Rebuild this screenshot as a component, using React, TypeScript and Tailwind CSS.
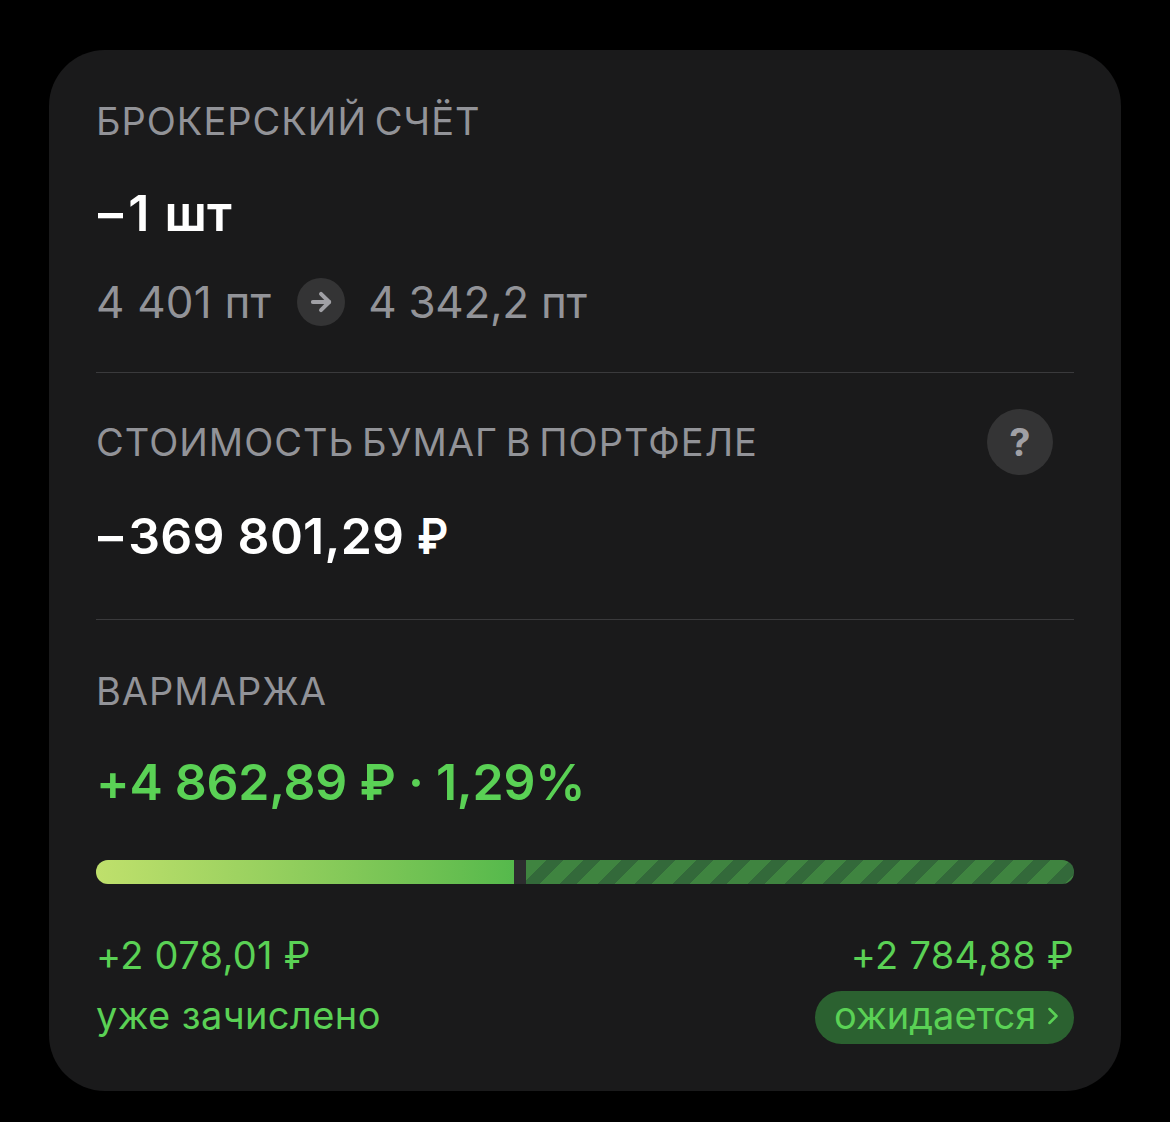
import React from 'react';
import { ArrowRight, ChevronRight } from 'lucide-react';

const font = { fontFamily: 'Inter, "Noto Sans", sans-serif' };

function Label({ children }: { children: React.ReactNode }) {
  return <div className="text-[38px] leading-[44px] tracking-[1px] text-[#929398] [word-spacing:-3.9px]">{children}</div>;
}

export default function App() {
  return (
    <div className="min-h-[1122px] w-[1170px] bg-black pt-[50px] pl-[49px]" style={font}>
      <div className="h-[1041px] w-[1072px] rounded-[56px] bg-[#1a1a1b] px-[47px]">
        {/* позиция */}
        <div className="h-[323px] border-b border-[#3a3a3c] pt-[49px]">
          <Label>БРОКЕРСКИЙ СЧЁТ</Label>
          <div className="mt-[42px] pl-[2px] text-[50px] leading-[56px] font-semibold tracking-[0.25px] text-white [font-kerning:none] [word-spacing:2px]">
            <span className="mr-[5px]">–</span>1 шт
          </div>
          <div className="mt-[35px] flex items-center text-[44px] leading-[52px] text-[#929398]">
            <span className="tracking-[0.2px]">4 401 пт</span>
            <span className="mr-[23px] ml-[26px] flex h-[48px] w-[48px] items-center justify-center rounded-full bg-[#343435]">
              <ArrowRight size={28} strokeWidth={3.4} className="text-[#a0a0a5]" />
            </span>
            <span className="tracking-[-0.3px]">4 342,2 пт</span>
          </div>
        </div>

        {/* стоимость */}
        <div className="h-[247px] border-b border-[#3a3a3c] pt-[36px]">
          <div className="flex items-center justify-between pr-[21px]">
            <Label>СТОИМОСТЬ БУМАГ В ПОРТФЕЛЕ</Label>
            <span className="flex h-[66px] w-[66px] items-center justify-center rounded-full bg-[#343435] text-[38px] font-bold text-[#a0a0a5]">?</span>
          </div>
          <div className="mt-[31px] pl-[2px] text-[50px] leading-[60px] font-semibold tracking-[0.25px] text-white [font-kerning:none]">
            <span className="mr-[5px]">–</span>369 801,29 <span className="inline-block origin-left scale-x-[0.86]">₽</span>
          </div>
        </div>

        {/* вармаржа */}
        <div className="pt-[49px]">
          <Label>ВАРМАРЖА</Label>
          <div className="mt-[39px] text-[50px] leading-[60px] font-semibold tracking-[-0.25px] text-[#5ad155]">+4 862,89 ₽ · 1,29%</div>
          <div className="mt-[48px] flex h-[24px] overflow-hidden rounded-full bg-[#2c2c2e]">
            <div className="w-[418px] bg-gradient-to-r from-[#bfe06c] to-[#55b94c]" />
            <div className="ml-[12px] flex-1 bg-[repeating-linear-gradient(135deg,#3f8440_0,#3f8440_14.3px,#33693a_14.3px,#33693a_26.5px)]" />
          </div>
          <div className="mt-[49px] flex justify-between text-[#5ad155]">
            <div>
              <div className="text-[38px] leading-[44px] tracking-[0.3px]">+2 078,01 ₽</div>
              <div className="mt-[16px] text-[38px] leading-[44px] tracking-[0.4px]">уже зачислено</div>
            </div>
            <div className="flex flex-col items-end">
              <div className="text-[38px] leading-[44px] tracking-[0.3px]">+2 784,88 ₽</div>
              <div className="mt-[14px] flex h-[53px] w-[259px] items-center rounded-full bg-[#2b6130] pb-[4px] pl-[19px] text-[38px]">
                ожидается
                <ChevronRight size={28} strokeWidth={2.2} className="ml-[3px]" />
              </div>
            </div>
          </div>
        </div>
      </div>
    </div>
  );
}
